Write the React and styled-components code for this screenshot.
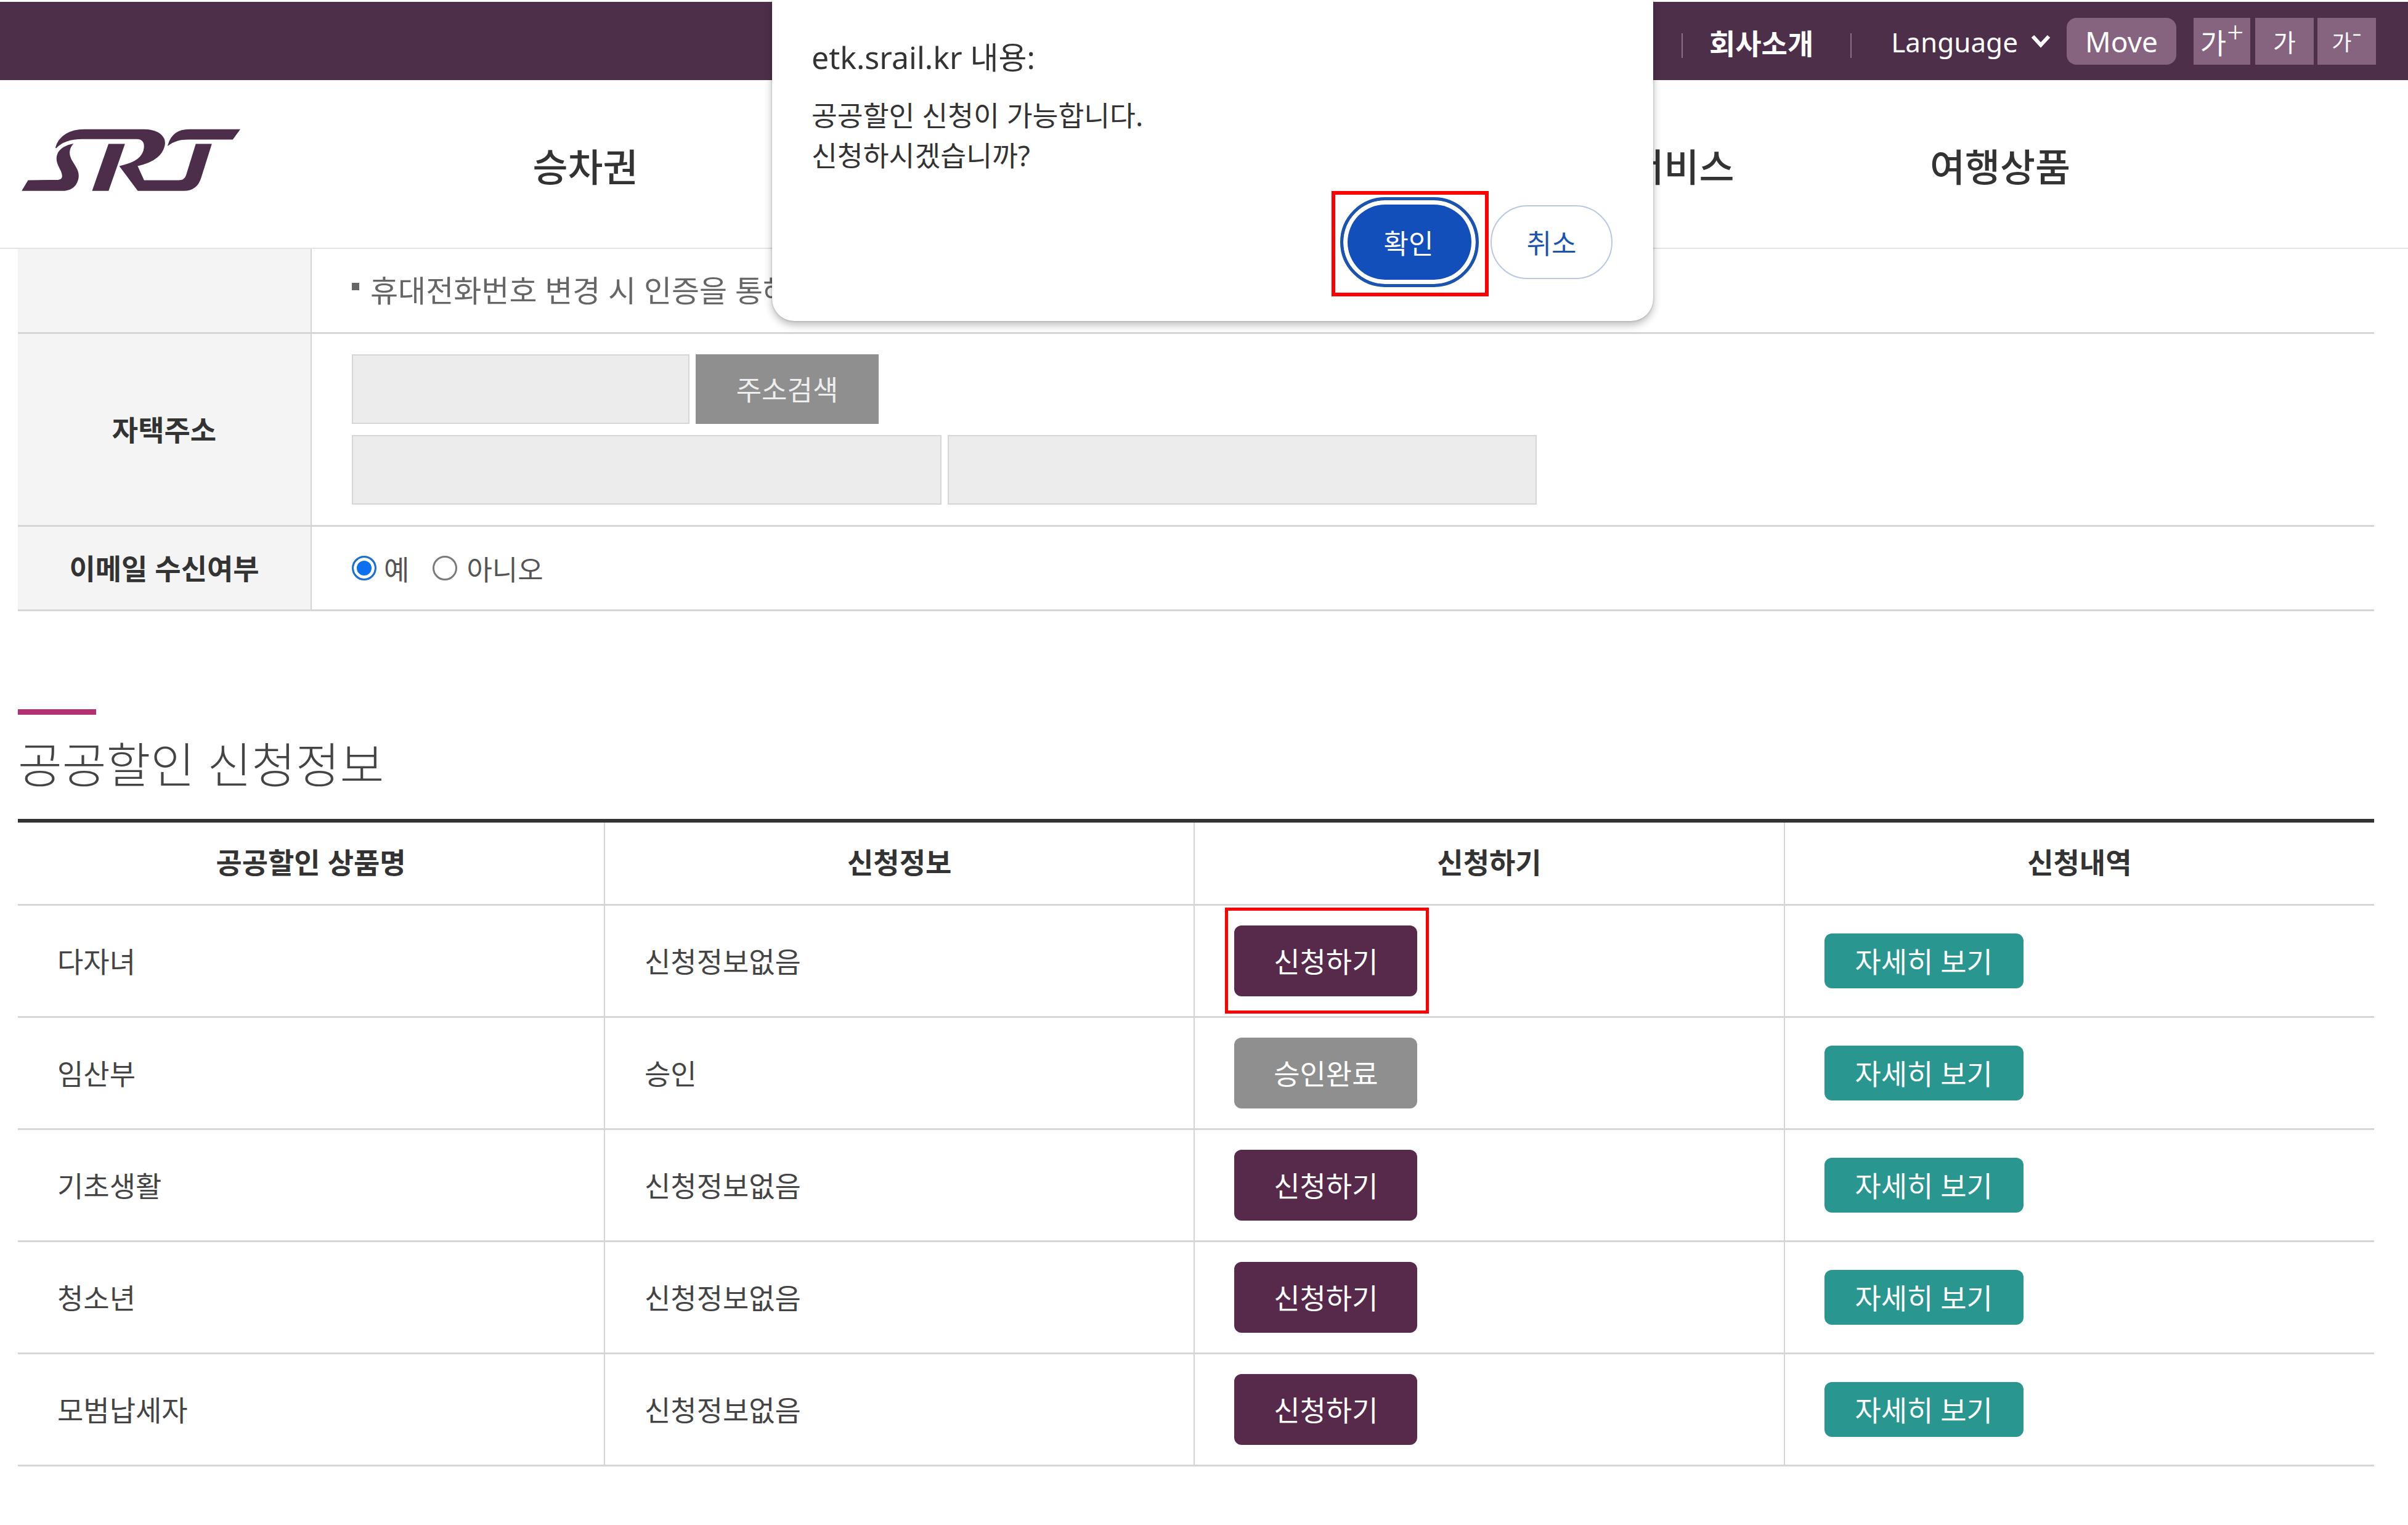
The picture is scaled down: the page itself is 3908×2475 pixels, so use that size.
import styled, { createGlobalStyle } from "styled-components";

const GlobalStyle = createGlobalStyle`
  html, body {
    margin: 0;
    background: #fff;
  }
  body {
    font-family: "Noto Sans", "Noto Sans CJK KR", sans-serif;
    color: #333;
  }
`;

const Page = styled.div`
  position: relative;
  width: 3908px;
  height: 2475px;
  overflow: hidden;
`;

const TopBar = styled.div`
  margin-top: 3px;
  height: 127px;
  background: #4e2f4a;
  display: flex;
  align-items: center;
  justify-content: flex-end;
  padding-right: 52px;
  color: #fff;
`;

const TopDivider = styled.span`
  width: 2px;
  height: 40px;
  background: #8a7087;
  margin-top: 14px;
`;

const TopLink = styled.a`
  font-size: ${p => (p.$bold ? "46px" : "44px")};
  font-weight: ${p => (p.$bold ? 700 : 400)};
  margin: 0 ${p => p.$right || 0}px 0 ${p => p.$left || 0}px;
  line-height: 1;
  padding-top: ${p => (p.$bold ? 6 : 2)}px;
  white-space: nowrap;
`;

const MoveButton = styled.button`
  width: 178px;
  height: 76px;
  margin: 0 28px 0 26px;
  border: 0;
  border-radius: 16px;
  background: #86647f;
  color: #fff;
  font: inherit;
  font-size: 46px;
  padding: 0;
`;

const SizeButton = styled.button`
  width: ${p => p.$w}px;
  height: 76px;
  margin-right: ${p => p.$gap || 0}px;
  border: 0;
  background: #86647f;
  color: #fff;
  font: inherit;
  font-size: ${p => p.$size}px;
  padding: 0;
  display: flex;
  align-items: center;
  justify-content: center;
  sup {
    font-size: 48px;
    font-weight: 300;
    line-height: 1;
    margin-top: -30px;
    margin-left: 1px;
  }
`;

const Header = styled.header`
  height: 274px;
  border-bottom: 2px solid #e4e4e4;
  display: flex;
  align-items: flex-start;
  padding: 65px 0 0 20px;
  box-sizing: border-box;
`;

const Logo = styled.svg`
  width: 390px;
  height: 130px;
  flex: none;
  fill: #4c2d4a;
  stroke: #4c2d4a;
  stroke-width: 5;
`;

const Nav = styled.nav`
  display: grid;
  grid-template-columns: repeat(5, 574px);
  margin-left: 253px;
  margin-top: 42px;
`;

const NavItem = styled.a`
  font-size: 62px;
  font-weight: 500;
  color: #333;
  text-align: center;
  line-height: 68px;
  white-space: nowrap;
`;

const Content = styled.main`
  padding: 0 55px 0 29px;
`;

const InfoRow = styled.div`
  display: grid;
  grid-template-columns: 477px 1fr;
  height: ${p => p.$h}px;
  border-bottom: 3px solid #d6d6d6;
  box-sizing: border-box;
`;

const InfoHead = styled.div`
  background: #f4f4f4;
  border-right: 2px solid #d4d4d4;
  display: flex;
  align-items: center;
  justify-content: center;
  padding-bottom: 4px;
  font-size: 46px;
  font-weight: 700;
  color: #333;
`;

const InfoCell = styled.div`
  padding-left: 65px;
  display: flex;
  flex-direction: column;
  justify-content: center;
  gap: 18px;
`;

const Notice = styled.p`
  margin: -6px 0 0;
  font-size: 49px;
  color: #666;
  display: flex;
  align-items: center;
  gap: 18px;
  white-space: nowrap;
  &::before {
    content: "";
    width: 12px;
    height: 12px;
    background: #666;
    margin-top: -8px;
  }
`;

const FieldRow = styled.div`
  display: flex;
  gap: 10px;
`;

const Field = styled.div`
  width: ${p => p.$w}px;
  height: 113px;
  background: #ececec;
  border: 2px solid #d6d6d6;
  box-sizing: border-box;
`;

const SearchButton = styled.button`
  width: 297px;
  height: 113px;
  border: 0;
  background: #8f8f8f;
  color: #eee;
  font: inherit;
  font-size: 45px;
  padding: 0 0 2px;
`;

const RadioGroup = styled.div`
  display: flex;
  align-items: center;
  font-size: 45px;
  color: #555;
`;

const Radio = styled.span`
  width: 40px;
  height: 40px;
  border-radius: 50%;
  box-sizing: border-box;
  margin-right: ${p => (p.$checked ? 12 : 15)}px;
  flex: none;
  border: 3px solid ${p => (p.$checked ? "#1a6fd8" : "#7a7a7a")};
  background: ${p => (p.$checked ? "#0a70f0" : "#fff")};
  box-shadow: ${p => (p.$checked ? "inset 0 0 0 5px #fff" : "none")};
`;

const RadioLabel = styled.span`
  margin-right: ${p => p.$gap || 0}px;
`;

const SectionTitle = styled.h2`
  margin: 159px 0 0;
  font-size: 78px;
  font-weight: 300;
  line-height: 1;
  color: #444;
  padding-top: 51px;
  position: relative;
  height: 136px;
  box-sizing: border-box;
  &::before {
    content: "";
    position: absolute;
    top: 0;
    left: 0;
    width: 127px;
    height: 9px;
    background: #b3316f;
  }
`;

const ApplyTable = styled.table`
  width: 100%;
  table-layout: fixed;
  border-collapse: collapse;
  margin-top: 42px;
  border-top: 6px solid #333;
  th, td {
    border-bottom: 3px solid #d6d6d6;
    border-right: 2px solid #d4d4d4;
    padding: 0;
    font-size: 46px;
    color: #444;
  }
  th:last-child, td:last-child {
    border-right: 0;
  }
  th {
    height: 124px;
    padding-bottom: 8px;
    font-weight: 700;
    color: #333;
  }
  th:first-child {
    width: 951px;
  }
  td {
    height: 179px;
    padding-left: 64px;
  }
`;

const Cell = styled.button`
  position: relative;
  display: block;
  width: ${p => (p.$variant === "detail" ? 323 : 297)}px;
  height: ${p => (p.$variant === "detail" ? 89 : 115)}px;
  border: 0;
  border-radius: 12px;
  padding: 0 0 3px;
  color: #fff;
  font: inherit;
  font-size: 46px;
  background: ${p => ({ apply: "#572a4b", done: "#8f8f8f", detail: "#2a9690" }[p.$variant])};
  ${p => p.$marked && `
    &::after {
      content: "";
      position: absolute;
      inset: -29px -19px -28px -15px;
      border: 5px solid #f00;
    }
  `}
`;

const RowLabel = styled.span`
  position: relative;
  top: -2px;
`;

const Dialog = styled.div`
  position: absolute;
  left: 1253px;
  top: 0;
  width: 1430px;
  height: 521px;
  box-sizing: border-box;
  padding: 62px 66px 0 64px;
  background: #fff;
  border-radius: 0 0 36px 36px;
  box-shadow: 0 6px 14px rgba(0, 0, 0, 0.28), 0 0 3px rgba(0, 0, 0, 0.25);
  color: #333;
`;

const DialogTitle = styled.div`
  font-size: 50px;
  line-height: 62px;
`;

const DialogText = styled.p`
  margin: 31px 0 0;
  font-size: 45.5px;
  line-height: 65px;
`;

const DialogActions = styled.div`
  display: flex;
  justify-content: flex-end;
  align-items: center;
  gap: 19px;
  margin-top: 35px;
`;

const OkButton = styled.button`
  position: relative;
  width: 225px;
  height: 146px;
  box-sizing: border-box;
  border: 5px solid #1a54b0;
  outline: 0;
  border-radius: 73px;
  background: #124fbb;
  box-shadow: inset 0 0 0 7px #fff;
  color: #fff;
  font: inherit;
  font-size: 44px;
  padding: 0 3px 0 0;
  &::after {
    content: "";
    position: absolute;
    inset: -15px -21px -20px -19px;
    border: 6px solid #f00;
    border-radius: 0;
  }
`;

const CancelButton = styled.button`
  width: 198px;
  height: 120px;
  box-sizing: border-box;
  border: 2px solid #b9c8e0;
  border-radius: 60px;
  background: #fff;
  color: #1a54b0;
  font: inherit;
  font-size: 44px;
  padding: 0;
`;

const rows = [
  { name: "다자녀", info: "신청정보없음", marked: true },
  { name: "임산부", info: "승인", done: true },
  { name: "기초생활", info: "신청정보없음" },
  { name: "청소년", info: "신청정보없음" },
  { name: "모범납세자", info: "신청정보없음" },
];

// the two middle menu entries sit behind the dialog
const navItems = ["승차권", "", "", "부가서비스", "여행상품"];

export default function App() {
  return (
    <Page>
      <GlobalStyle />
      <TopBar>
        <TopDivider />
        <TopLink $bold $left={43} $right={60}>회사소개</TopLink>
        <TopDivider />
        <TopLink $left={64} $right={21}>Language</TopLink>
        <svg width="32" height="22" viewBox="0 0 32 22">
          <polyline points="3,3 16,17 29,3" fill="none" stroke="#fff" strokeWidth="6" />
        </svg>
        <MoveButton>Move</MoveButton>
        <SizeButton $w={92} $gap={8} $size={46}>가<sup>+</sup></SizeButton>
        <SizeButton $w={95} $gap={6} $size={40}>가</SizeButton>
        <SizeButton $w={95} $size={35}>가<sup>-</sup></SizeButton>
      </TopBar>
      <Header>
        <Logo viewBox="0 0 1170 390" aria-label="SRT">
          <path d="M212 135 C228 75 285 47 350 47 L640 47 C715 47 752 85 738 130 C725 178 680 205 607 222 L640 295 L810 295 C830 295 842 288 848 270 L895 118 L968 118 L917 280 C905 320 880 342 835 342 L612 342 L525 225 C580 212 625 195 640 150 C650 115 640 90 605 90 L340 90 C280 90 240 105 212 135 Z" />
          <path d="M760 120 C775 70 810 47 860 47 L1105 47 L1072 92 L860 92 C810 92 785 102 760 120 Z" />
          <path d="M470 118 L545 118 L467 342 L392 342 Z" />
          <path d="M50 342 L78 295 L225 293 C245 290 250 275 240 250 C225 220 210 195 222 165 C232 140 265 122 292 118 C270 145 275 175 290 200 C310 232 328 255 318 290 C308 325 280 342 240 342 Z" />
        </Logo>
        <Nav>
          {navItems.map((item, i) => <NavItem key={i}>{item}</NavItem>)}
        </Nav>
      </Header>
      <Content>
        <InfoRow $h={138}>
          <InfoHead />
          <InfoCell><Notice>휴대전화번호 변경 시 인증을 통해</Notice></InfoCell>
        </InfoRow>
        <InfoRow $h={313}>
          <InfoHead>자택주소</InfoHead>
          <InfoCell>
            <FieldRow>
              <Field $w={548} />
              <SearchButton>주소검색</SearchButton>
            </FieldRow>
            <FieldRow>
              <Field $w={957} />
              <Field $w={956} />
            </FieldRow>
          </InfoCell>
        </InfoRow>
        <InfoRow $h={137}>
          <InfoHead>이메일 수신여부</InfoHead>
          <InfoCell>
            <RadioGroup>
              <Radio $checked />
              <RadioLabel $gap={38}>예</RadioLabel>
              <Radio />
              <RadioLabel>아니오</RadioLabel>
            </RadioGroup>
          </InfoCell>
        </InfoRow>
        <SectionTitle>공공할인 신청정보</SectionTitle>
        <ApplyTable>
          <thead>
            <tr>
              <th>공공할인 상품명</th>
              <th>신청정보</th>
              <th>신청하기</th>
              <th>신청내역</th>
            </tr>
          </thead>
          <tbody>
            {rows.map(row => (
              <tr key={row.name}>
                <td><RowLabel>{row.name}</RowLabel></td>
                <td><RowLabel>{row.info}</RowLabel></td>
                <td>
                  <Cell $variant={row.done ? "done" : "apply"} $marked={row.marked}>
                    {row.done ? "승인완료" : "신청하기"}
                  </Cell>
                </td>
                <td><Cell $variant="detail">자세히 보기</Cell></td>
              </tr>
            ))}
          </tbody>
        </ApplyTable>
      </Content>
      <Dialog>
        <DialogTitle>etk.srail.kr 내용:</DialogTitle>
        <DialogText>공공할인 신청이 가능합니다.<br />신청하시겠습니까?</DialogText>
        <DialogActions>
          <OkButton>확인</OkButton>
          <CancelButton>취소</CancelButton>
        </DialogActions>
      </Dialog>
    </Page>
  );
}
